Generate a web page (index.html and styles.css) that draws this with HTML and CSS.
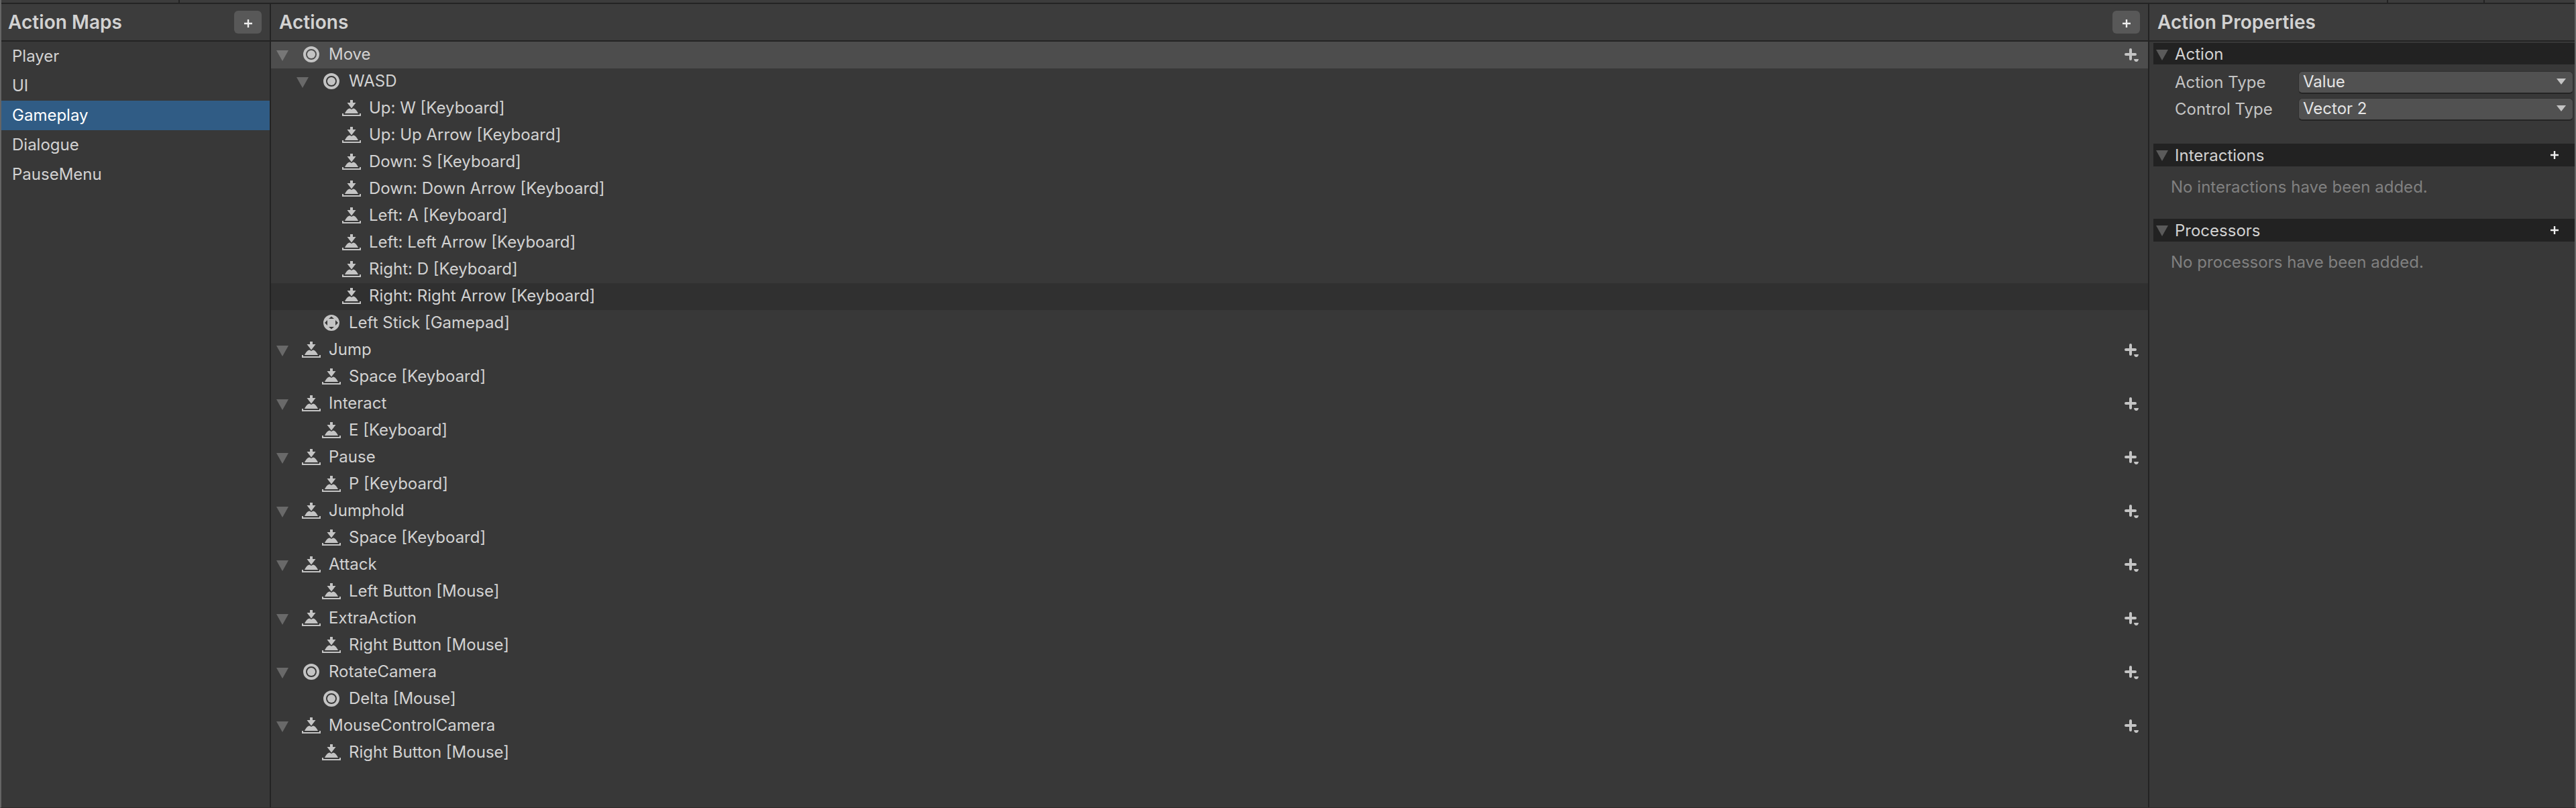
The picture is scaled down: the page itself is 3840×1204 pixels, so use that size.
FILE: index.html
```html
<!DOCTYPE html>
<html lang="en">
<head>
<meta charset="utf-8">
<title>Input Actions</title>
<link rel="stylesheet" href="styles.css">
</head>
<body>
<svg class="defs" aria-hidden="true">
  <symbol id="fold" viewBox="0 0 18 16"><path d="M0 0H18L9 16Z" fill="currentColor"/></symbol>
  <symbol id="caret" viewBox="0 0 14 9"><path d="M0 0H14L7 9Z" fill="currentColor"/></symbol>
  <symbol id="value" viewBox="0 0 28 24"><circle cx="14" cy="12" r="10" fill="none" stroke="currentColor" stroke-width="4"/><circle cx="14" cy="12" r="6.1" fill="currentColor"/></symbol>
  <symbol id="button" viewBox="0 0 28 24"><path d="M12 0H16V4H20.500L14 12.500L7.500 4H12ZM4 20C6 16 8 13 11.500 12.500L14 14L16.500 12.500C20 13 22 16 24 20ZM0 20H2V22H26V20H28V24H0Z" fill="currentColor"/></symbol>
  <symbol id="stick" viewBox="0 0 28 24"><path fill-rule="evenodd" d="M14 0A12 12 0 0 1 14 24A12 12 0 0 1 14 0ZM10 6H18L14 2.500ZM10 18H18L14 21.500ZM8 8V16L4 12ZM20 8V16L24 12Z" fill="currentColor"/></symbol>
  <symbol id="add" viewBox="0 0 22 20"><path d="M9 2V16M2 9H16" stroke="currentColor" stroke-width="4" stroke-linecap="round"/><path d="M14 16H21Q20.500 20 17.500 20Q14.500 20 14 16Z" fill="currentColor"/></symbol>
  <symbol id="plus" viewBox="0 0 12 12"><path d="M6 0V12M0 6H12" stroke="currentColor" stroke-width="2.400"/></symbol>
</svg>
<div class="window">
  <div class="toolbar"><span class="seg seg-a"></span><span class="seg seg-b"></span><span class="seg seg-c"></span></div>
  <div class="panes">
    <section class="pane maps">
      <header class="head"><h2>Action Maps</h2><button class="add-btn"><svg class="plus"><use href="#plus"/></svg></button></header>
      <ul class="map-list">
        <li>Player</li><li>UI</li><li class="selected">Gameplay</li><li>Dialogue</li><li>PauseMenu</li>
      </ul>
    </section>
    <section class="pane actions">
      <header class="head"><h2>Actions</h2><button class="add-btn"><svg class="plus"><use href="#plus"/></svg></button></header>
      <ul class="tree">
        <li class="row current"><svg class="fold"><use href="#fold"/></svg><svg class="icon"><use href="#value"/></svg><span>Move</span><svg class="add"><use href="#add"/></svg></li>
        <li class="row l1"><svg class="fold"><use href="#fold"/></svg><svg class="icon"><use href="#value"/></svg><span>WASD</span></li>
        <li class="row l2 leaf"><svg class="icon"><use href="#button"/></svg><span>Up: W [Keyboard]</span></li>
        <li class="row l2 leaf"><svg class="icon"><use href="#button"/></svg><span>Up: Up Arrow [Keyboard]</span></li>
        <li class="row l2 leaf"><svg class="icon"><use href="#button"/></svg><span>Down: S [Keyboard]</span></li>
        <li class="row l2 leaf"><svg class="icon"><use href="#button"/></svg><span>Down: Down Arrow [Keyboard]</span></li>
        <li class="row l2 leaf"><svg class="icon"><use href="#button"/></svg><span>Left: A [Keyboard]</span></li>
        <li class="row l2 leaf"><svg class="icon"><use href="#button"/></svg><span>Left: Left Arrow [Keyboard]</span></li>
        <li class="row l2 leaf"><svg class="icon"><use href="#button"/></svg><span>Right: D [Keyboard]</span></li>
        <li class="row l2 leaf hover"><svg class="icon"><use href="#button"/></svg><span>Right: Right Arrow [Keyboard]</span></li>
        <li class="row l1 leaf"><svg class="icon"><use href="#stick"/></svg><span>Left Stick [Gamepad]</span></li>
        <li class="row"><svg class="fold"><use href="#fold"/></svg><svg class="icon"><use href="#button"/></svg><span>Jump</span><svg class="add"><use href="#add"/></svg></li>
        <li class="row l1 leaf"><svg class="icon"><use href="#button"/></svg><span>Space [Keyboard]</span></li>
        <li class="row"><svg class="fold"><use href="#fold"/></svg><svg class="icon"><use href="#button"/></svg><span>Interact</span><svg class="add"><use href="#add"/></svg></li>
        <li class="row l1 leaf"><svg class="icon"><use href="#button"/></svg><span>E [Keyboard]</span></li>
        <li class="row"><svg class="fold"><use href="#fold"/></svg><svg class="icon"><use href="#button"/></svg><span>Pause</span><svg class="add"><use href="#add"/></svg></li>
        <li class="row l1 leaf"><svg class="icon"><use href="#button"/></svg><span>P [Keyboard]</span></li>
        <li class="row"><svg class="fold"><use href="#fold"/></svg><svg class="icon"><use href="#button"/></svg><span>Jumphold</span><svg class="add"><use href="#add"/></svg></li>
        <li class="row l1 leaf"><svg class="icon"><use href="#button"/></svg><span>Space [Keyboard]</span></li>
        <li class="row"><svg class="fold"><use href="#fold"/></svg><svg class="icon"><use href="#button"/></svg><span>Attack</span><svg class="add"><use href="#add"/></svg></li>
        <li class="row l1 leaf"><svg class="icon"><use href="#button"/></svg><span>Left Button [Mouse]</span></li>
        <li class="row"><svg class="fold"><use href="#fold"/></svg><svg class="icon"><use href="#button"/></svg><span>ExtraAction</span><svg class="add"><use href="#add"/></svg></li>
        <li class="row l1 leaf"><svg class="icon"><use href="#button"/></svg><span>Right Button [Mouse]</span></li>
        <li class="row"><svg class="fold"><use href="#fold"/></svg><svg class="icon"><use href="#value"/></svg><span>RotateCamera</span><svg class="add"><use href="#add"/></svg></li>
        <li class="row l1 leaf"><svg class="icon"><use href="#value"/></svg><span>Delta [Mouse]</span></li>
        <li class="row"><svg class="fold"><use href="#fold"/></svg><svg class="icon"><use href="#button"/></svg><span>MouseControlCamera</span><svg class="add"><use href="#add"/></svg></li>
        <li class="row l1 leaf"><svg class="icon"><use href="#button"/></svg><span>Right Button [Mouse]</span></li>
      </ul>
    </section>
    <section class="pane props">
      <header class="head"><h2>Action Properties</h2></header>
      <div class="props-body">
        <div class="group first"><svg class="fold"><use href="#fold"/></svg><span>Action</span></div>
        <div class="fields">
          <div class="field"><label>Action Type</label><div class="select"><span>Value</span><svg class="caret"><use href="#caret"/></svg></div></div>
          <div class="field"><label>Control Type</label><div class="select"><span>Vector 2</span><svg class="caret"><use href="#caret"/></svg></div></div>
        </div>
        <div class="group"><svg class="fold"><use href="#fold"/></svg><span>Interactions</span><svg class="plus"><use href="#plus"/></svg></div>
        <p class="empty">No interactions have been added.</p>
        <div class="group"><svg class="fold"><use href="#fold"/></svg><span>Processors</span><svg class="plus"><use href="#plus"/></svg></div>
        <p class="empty">No processors have been added.</p>
      </div>
    </section>
  </div>
</div>
</body>
</html>
```
FILE: styles.css
```css
* { box-sizing: border-box; }
body {
  margin: 0;
  background: #383838;
  color: #d2d2d2;
  font: 24px/40px Inter, "Liberation Sans", sans-serif;
}
ul, h2, p { margin: 0; padding: 0; list-style: none; }
svg { display: block; flex: none; }
.defs { display: none; }
.window {
  height: 1204px;
  display: flex;
  flex-direction: column;
  border-left: 2px solid #656565;
  border-right: 2px solid #656565;
  border-bottom: 1px solid #302a2b;
}
.toolbar {
  height: 6px;
  flex: none;
  display: flex;
  background: #3c3c3c;
  border-bottom: 2px solid #232323;
}
.seg { border-right: 2px solid #232323; flex: none; }
.seg-a { width: 266px; }
.seg-b { width: 3292px; }
.seg-c { width: 144px; }
.panes {
  flex: 1;
  display: grid;
  grid-template-columns: 402px 2800px 1fr;
}
.pane { min-width: 0; border-right: 2px solid #232323; }
.props { border-right: 0; }
.head {
  height: 56px;
  display: flex;
  align-items: center;
  justify-content: space-between;
  padding: 0 12px 0 10px;
  background: #3c3c3c;
  border-bottom: 2px solid #232323;
}
.actions .head, .props .head { padding-left: 12px; }
h2 { font-size: 28px; font-weight: 600; line-height: 54px; letter-spacing: 0.05px; }
.add-btn {
  width: 41px;
  height: 34px;
  border: 0;
  border-radius: 6px;
  padding: 4px 0 0;
  background: #585858;
  color: #eee;
  display: flex;
  align-items: center;
  justify-content: center;
}
.plus { width: 12px; height: 12px; }
.map-list li { height: 44px; line-height: 43px; padding-left: 16px; }
.map-list .selected { background: #305c85; color: #fff; }
.row {
  height: 40px;
  line-height: 37px;
  display: flex;
  padding-left: 8px;
}
.row .fold { width: 18px; height: 16px; margin: 13px 20px 0 0; color: #696969; }
.row .icon { width: 28px; height: 24px; margin: 7px 12px 0 0; color: #c4c4c4; }
.row.l1 { padding-left: 38px; }
.row.l2 { padding-left: 68px; }
.row.leaf .icon { margin-left: 38px; }
.row .add { width: 22px; height: 20px; margin: 10px 13px 0 auto; color: #c4c4c4; }
.current { background: #4d4d4d; }
.current .fold { color: #777; }
.hover { background: #303030; }
.props-body { padding: 2px 0 0 6px; }
.group {
  height: 34px;
  line-height: 35px;
  display: flex;
  background: #222;
  padding: 0 24px 0 4px;
}
.group.first { height: 32px; line-height: 33px; }
.group .fold { width: 18px; height: 16px; margin: 10px 10px 0 0; color: #5a5a5a; }
.group .plus { margin: 11px 0 0 auto; color: #eee; }
.fields { display: flex; flex-direction: column; padding: 10px 2px 0 32px; height: 118px; }
.field { display: flex; height: 40px; }
label { width: 184px; line-height: 33px; color: #c4c4c4; }
.select {
  flex: 1;
  height: 34px;
  line-height: 29px;
  display: flex;
  justify-content: space-between;
  padding: 0 10px 0 6px;
  background: #515151;
  border: 1px solid #303030;
  border-bottom: 2px solid #242424;
  border-radius: 6px;
  color: #e4e4e4;
}
.caret { width: 14px; height: 9px; margin-top: 10px; color: #c4c4c4; }
.empty { height: 78px; line-height: 61px; padding-left: 26px; letter-spacing: 0.03px; color: #808080; }
```
